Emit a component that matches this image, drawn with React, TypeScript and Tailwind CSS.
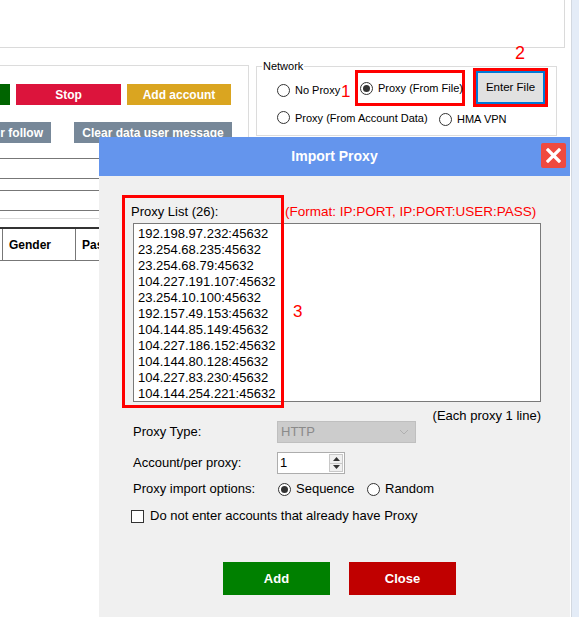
import type { ReactNode } from "react";

const proxies = [
  "192.198.97.232:45632",
  "23.254.68.235:45632",
  "23.254.68.79:45632",
  "104.227.191.107:45632",
  "23.254.10.100:45632",
  "192.157.49.153:45632",
  "104.144.85.149:45632",
  "104.227.186.152:45632",
  "104.144.80.128:45632",
  "104.227.83.230:45632",
  "104.144.254.221:45632",
];

function Radio({ checked = false }: { checked?: boolean }) {
  return (
    <span className="flex h-[13px] w-[13px] shrink-0 items-center justify-center rounded-full border border-[#333] bg-white">
      {checked && <span className="h-[7px] w-[7px] rounded-full bg-[#333]" />}
    </span>
  );
}

function Choice({ checked, children, className = "" }: { checked?: boolean; children: ReactNode; className?: string }) {
  return (
    <label className={`flex items-center gap-[5px] whitespace-nowrap ${className}`}>
      <Radio checked={checked} />
      <span>{children}</span>
    </label>
  );
}

function Mark({ children, className = "" }: { children: ReactNode; className?: string }) {
  return <span className={`text-[17px] leading-none text-[#ff0000] ${className}`}>{children}</span>;
}

export default function App() {
  return (
    <div className="relative flex h-[617px] w-[579px] overflow-hidden bg-white font-['Liberation_Sans',Arial,sans-serif] text-[13px] text-black">
      {/* fenêtre principale, en arrière-plan */}
      <div className="w-[571px] shrink-0">
        <div className="h-[48px] w-[565px] border-r border-b border-[#dadada]" />

        <div className="mt-[17px] flex items-start">
          <div className="h-[93px] w-[249px] border-t border-r border-[#dcdcdc] pt-[18px] text-[12px] font-bold text-white">
            <div className="flex gap-[6px]">
              <span className="h-[21px] w-[10px] bg-[#006400]" />
              <button className="flex h-[21px] w-[105px] items-center justify-center bg-[#dc143c]">Stop</button>
              <button className="flex h-[21px] w-[104px] items-center justify-center bg-[#daa520]">Add account</button>
            </div>
            <div className="mt-[17px] flex">
              <button className="flex h-[21px] w-[51px] items-center justify-end whitespace-nowrap bg-[#778899] pr-[8px]">
                r follow
              </button>
              <button className="ml-[23px] flex h-[21px] w-[158px] items-center justify-center whitespace-nowrap bg-[#778899]">
                Clear data user message
              </button>
            </div>
          </div>

          {/* Network */}
          <div className="relative ml-[7px] mt-px h-[70px] w-[301px] border border-[#dcdcdc] text-[11px]">
            <span className="absolute -top-[8px] left-[5px] bg-white px-px leading-[14px]">Network</span>
            <div className="flex pl-[20px] pt-[3px]">
              <Choice className="mt-[5px] h-[30px] w-[64px]">No Proxy</Choice>
              <Mark className="mt-[13px] w-[14px]">1</Mark>
              <div className="flex h-[36px] w-[110px] items-center border-[3px] border-[#ff0000] pl-[2px]">
                <Choice checked>Proxy (From File)</Choice>
              </div>
              <div className="relative ml-[8px] -mt-[2px] flex h-[39px] w-[75px] items-center justify-center border-[3px] border-[#ff0000]">
                <Mark className="absolute -top-[27px] left-[39px] text-[18px]">2</Mark>
                <button className="flex h-[33px] w-[69px] items-center justify-center whitespace-nowrap border-2 border-[#0078d7] bg-[#e1e1e1] text-[11.5px]">
                  Enter File
                </button>
              </div>
            </div>
            <div className="mt-px flex pl-[20px]">
              <Choice className="w-[162px]">Proxy (From Account Data)</Choice>
              <Choice className="mt-[3px]">HMA VPN</Choice>
            </div>
          </div>
        </div>

        <div className="w-[250px]">
          <div className="h-[21px] border-y border-[#777]" />
          <div className="mt-[11px] h-[21px] border-y border-[#777]" />
          <div className="mt-[7px] h-px bg-[#dcdcdc]" />
          <div className="mt-[8px] flex h-[34px] border-t-2 border-b border-t-[#333] border-b-[#777] text-[12px] font-bold">
            <div className="w-[3px] border-r border-[#777]" />
            <div className="flex w-[73px] items-center border-r border-[#777] pl-[6px]">Gender</div>
            <div className="flex flex-1 items-center pl-[6px]">Password</div>
          </div>
        </div>
      </div>
      <div className="w-px bg-[#d2d8e0]" />
      <div className="flex-1 bg-[#e4ecf7]" />

      {/* boîte de dialogue */}
      <div className="absolute bottom-0 left-[99px] top-[137px] w-[471px] bg-[#f0f0f0]">
        <div className="relative flex h-[39px] items-center justify-center bg-[#6495ed] text-[14px] font-bold text-white">
          Import Proxy
          <button className="absolute right-[4px] top-[6px] flex h-[25px] w-[25px] items-center justify-center rounded-[2px] bg-[#ef4a3f]">
            <svg width="15" height="15" viewBox="0 0 15 15">
              <path d="M2 2L13 13M13 2L2 13" stroke="white" strokeWidth="3.2" strokeLinecap="square" />
            </svg>
          </button>
        </div>

        <div className="relative pl-[34px] pt-[28px]">
          <div className="absolute left-[23px] top-[19px] h-[213px] w-[162px] border-[3px] border-[#ff0000]" />
          <Mark className="absolute left-[194px] top-[127px]">3</Mark>

          <div className="flex w-[408px] items-center whitespace-nowrap leading-[16px]">
            <span className="-ml-[2px] w-[154px]">Proxy List (26):</span>
            <span className="text-[13.5px] text-[#ff0000]">(Format: IP:PORT, IP:PORT:USER:PASS)</span>
          </div>
          <div className="mt-[3px] h-[179px] w-[408px] overflow-hidden whitespace-pre border border-[#7a7a7a] bg-white pl-[4px] pt-[2px] leading-[16px]">
            {proxies.join("\n")}
          </div>
          <div className="mt-[7px] w-[408px] text-right leading-[14px]">(Each proxy 1 line)</div>

          <div className="-mt-[2px] grid grid-cols-[144px_1fr] items-center gap-y-[9px]">
            <span>Proxy Type:</span>
            <div className="flex h-[22px] w-[139px] items-center justify-between border border-[#bfbfbf] bg-[#cccccc] pl-[3px] pr-[6px] text-[#8a8a8a]">
              HTTP
              <svg width="10" height="6" viewBox="0 0 10 6">
                <path d="M1 1l4 4 4-4" fill="none" stroke="#b0b0b0" strokeWidth="1" />
              </svg>
            </div>
            <span>Account/per proxy:</span>
            <div className="flex h-[22px] w-[68px] border border-[#adadad] bg-white">
              <span className="flex flex-1 items-center pl-[2px]">1</span>
              <div className="my-px mr-px flex w-[14px] flex-col border border-[#c8c8c8] bg-[#f0f0f0]">
                <span className="flex flex-1 items-center justify-center border-b border-[#c8c8c8]">
                  <svg width="7" height="4" viewBox="0 0 7 4"><path d="M0 4L3.5 0 7 4z" fill="#333" /></svg>
                </span>
                <span className="flex flex-1 items-center justify-center">
                  <svg width="7" height="4" viewBox="0 0 7 4"><path d="M0 0L3.5 4 7 0z" fill="#333" /></svg>
                </span>
              </div>
            </div>
          </div>

          <div className="mt-[7px] flex h-[16px] items-center">
            <span className="w-[145px]">Proxy import options:</span>
            <Choice checked className="w-[89px]">Sequence</Choice>
            <Choice>Random</Choice>
          </div>

          <label className="-ml-[2px] mt-[11px] flex h-[16px] items-center gap-[6px]">
            <span className="h-[13px] w-[13px] border border-[#333] bg-white" />
            Do not enter accounts that already have Proxy
          </label>

          <div className="mt-[38px] flex gap-[19px] pl-[90px] font-bold text-white">
            <button className="flex h-[33px] w-[107px] items-center justify-center bg-[#008000]">Add</button>
            <button className="flex h-[33px] w-[107px] items-center justify-center bg-[#c00000]">Close</button>
          </div>
        </div>
      </div>
    </div>
  );
}
